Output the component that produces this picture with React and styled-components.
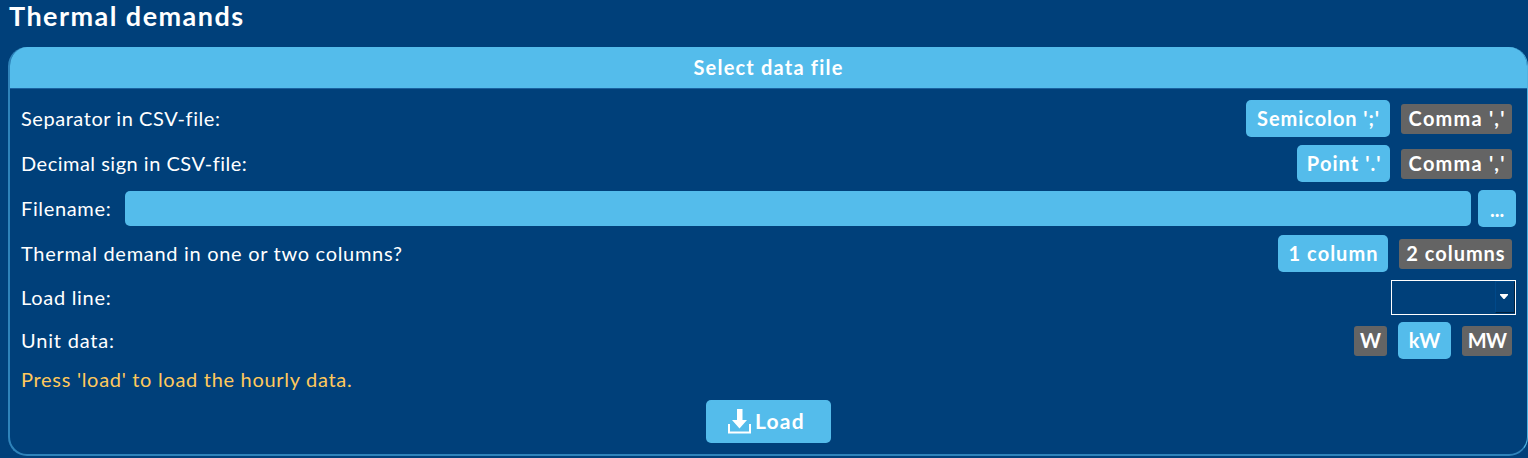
import React from "react";
import styled, { createGlobalStyle } from "styled-components";

const GlobalStyle = createGlobalStyle`
  * { box-sizing: border-box; }
  body {
    margin: 0;
    background: #00407a;
    color: #fff;
    font: 400 20px/24px Lato, "Open Sans", sans-serif;
    overflow: hidden;
  }
  button { font: inherit; color: inherit; border: 0; padding: 0; }
`;

const Page = styled.main`
  height: 458px;
  padding-left: 8px;
`;

const Title = styled.h1`
  margin: 0;
  height: 47px;
  padding-left: 1px;
  font-size: 27px;
  font-weight: 700;
  line-height: 31px;
  letter-spacing: 1.45px;
  white-space: nowrap;
`;

const Panel = styled.section`
  height: 409px;
  border: 2px solid #2f83ba;
  border-top: 0;
  border-right: 1px solid #4fb3e2;
  border-radius: 19px;
  overflow: hidden;
`;

const PanelHeader = styled.h2`
  margin: 0 -1px;
  height: 42px;
  border-bottom: 1px solid #1a62a0;
  background: #54bceb;
  font-size: 20px;
  font-weight: 700;
  line-height: 40px;
  text-align: center;
  letter-spacing: 1.2px;
`;

const Body = styled.div`
  display: flex;
  flex-direction: column;
  gap: 8px;
  padding: 11px 11px 0 11px;
`;

const Row = styled.div`
  display: flex;
  align-items: center;
  height: ${(p) => p.$height || 37}px;
`;

const Label = styled.span`
  padding-bottom: ${(p) => (p.$level ? 0 : 2)}px;
  white-space: nowrap;
  letter-spacing: ${(p) => p.$spacing || 0}px;
`;

const Options = styled.div`
  display: flex;
  align-items: center;
  gap: 11px;
  margin: 0 4px 0 auto;
`;

const Option = styled.button`
  width: ${(p) => p.$width}px;
  height: ${(p) => (p.$active ? 37 : 30)}px;
  padding: 0 0 2px ${(p) => Math.max(p.$spacing || 0, 0)}px;
  border-radius: ${(p) => (p.$active ? 5 : 3)}px;
  background: ${(p) => (p.$active ? "#54bceb" : "#646464")};
  font-weight: 700;
  font-kerning: none;
  white-space: nowrap;
  letter-spacing: ${(p) => p.$spacing || 0}px;
`;

const FileInput = styled.input`
  flex: 1;
  min-width: 0;
  height: 35px;
  margin: 0 7px 0 14px;
  border: 0;
  border-radius: 5px;
  background: #54bceb;
  color: #fff;
  font: inherit;
`;

const FilenameLabel = styled(Label)`
  width: 90px;
`;

const BrowseButton = styled.button`
  width: 38px;
  height: 37px;
  border-radius: 5px;
  background: #54bceb;
  font-weight: 700;
`;

const Combo = styled.button`
  display: flex;
  justify-content: flex-end;
  width: 125px;
  height: 35px;
  margin-left: auto;
  border: 1px solid #fff;
  background: #00407a;
`;

const ComboArrow = styled.span`
  display: flex;
  align-items: center;
  justify-content: center;
  width: 20px;
  height: 32px;
  padding-right: 2px;
  border: 1px solid #00498a;
  border-right-color: #00203d;
  border-bottom-color: #00203d;
`;

const Hint = styled(Label)`
  color: #ffc95c;
`;

const LoadButton = styled.button`
  display: flex;
  align-items: center;
  gap: 4px;
  width: 125px;
  height: 43px;
  margin: -1px auto 0;
  padding-left: 22px;
  border-radius: 5px;
  background: #54bceb;
  font-size: 21px;
  font-weight: 700;
`;

function OptionGroup({ items }) {
  return (
    <Options>
      {items.map((o) => (
        <Option key={o.text} $width={o.width} $active={o.active} $spacing={o.spacing}>
          {o.text}
        </Option>
      ))}
    </Options>
  );
}

const separators = [
  { text: "Semicolon ';'", width: 144, active: true, spacing: 0.9 },
  { text: "Comma ','", width: 111, spacing: 1.2 },
];
const decimals = [
  { text: "Point '.'", width: 93, active: true, spacing: 1 },
  { text: "Comma ','", width: 111, spacing: 1.2 },
];
const columns = [
  { text: "1 column", width: 110, active: true, spacing: 1 },
  { text: "2 columns", width: 113, spacing: 0.95 },
];
const units = [
  { text: "W", width: 33 },
  { text: "kW", width: 53, active: true },
  { text: "MW", width: 50, spacing: -0.8 },
];

export default function App() {
  return (
    <>
      <GlobalStyle />
      <Page>
        <Title>Thermal demands</Title>
        <Panel>
          <PanelHeader>Select data file</PanelHeader>
          <Body>
            <Row>
              <Label $spacing={0.55}>Separator in CSV-file:</Label>
              <OptionGroup items={separators} />
            </Row>
            <Row>
              <Label $spacing={0.5}>Decimal sign in CSV-file:</Label>
              <OptionGroup items={decimals} />
            </Row>
            <Row>
              <FilenameLabel $spacing={0.65}>Filename:</FilenameLabel>
              <FileInput aria-label="Filename" />
              <BrowseButton>...</BrowseButton>
            </Row>
            <Row>
              <Label $spacing={0.7}>Thermal demand in one or two columns?</Label>
              <OptionGroup items={columns} />
            </Row>
            <Row $height={34}>
              <Label $level $spacing={0.7}>Load line:</Label>
              <Combo aria-label="Load line">
                <ComboArrow>
                  <svg width="8" height="5" viewBox="0 0 8 5">
                    <path d="M0 0h8v1L4.5 5h-1L0 1z" fill="#fff" />
                  </svg>
                </ComboArrow>
              </Combo>
            </Row>
            <Row>
              <Label $spacing={0.8}>Unit data:</Label>
              <OptionGroup items={units} />
            </Row>
            <Row $height={26}>
              <Hint $spacing={0.7}>Press 'load' to load the hourly data.</Hint>
            </Row>
            <LoadButton>
              <svg width="23" height="25" viewBox="0 0 23 25">
                <path d="M9 0h5.5v11H19l-7.5 8.5L4 11h5z" fill="#fff" />
                <path d="M1 15v8.5h21V15" fill="none" stroke="#fff" strokeWidth="2" />
              </svg>
              <Label $spacing={1.2}>Load</Label>
            </LoadButton>
          </Body>
        </Panel>
      </Page>
    </>
  );
}
